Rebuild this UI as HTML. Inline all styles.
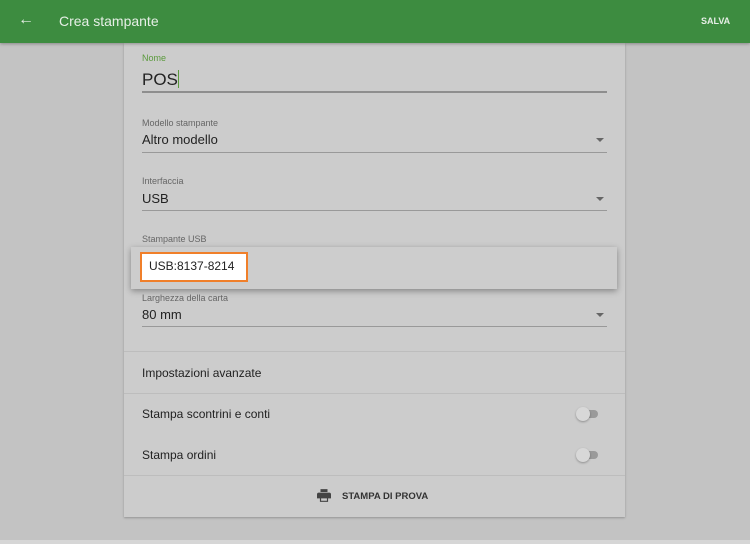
<!DOCTYPE html><html><head><style>
body{margin:0;width:750px;height:544px;background:#c3c3c3;font-family:"Liberation Sans",sans-serif;position:relative;overflow:hidden}
.hdr{position:absolute;left:0;top:0;width:750px;height:43px;background:#3d8c40;box-shadow:0 1px 3px rgba(0,0,0,.3);color:#e6efe6;z-index:3}
.card{position:absolute;left:124px;top:43px;width:501px;height:474px;background:#cccccc;box-shadow:0 1px 2px rgba(0,0,0,.25)}
.a{position:absolute}
.lbl{font-size:9px;color:#666}
.val{font-size:13px;color:#222}
.ul{position:absolute;left:18px;width:465px;height:1px;background:#999}
.arr{position:absolute;left:472px;width:0;height:0;border-left:4px solid transparent;border-right:4px solid transparent;border-top:4px solid #666}
.div{position:absolute;left:0;width:501px;height:1px;background:#bdbdbd}
.sw{position:absolute;left:452px;width:24px;height:10px}
.sw i{position:absolute;left:4px;top:1px;width:18px;height:8px;border-radius:4px;background:#9a9a9a}
.sw b{position:absolute;left:0;top:-2px;width:14px;height:14px;border-radius:7px;background:#d8d8d8;box-shadow:0 1px 2px rgba(0,0,0,.3)}
</style></head><body>
<div class="hdr"><span class="a" style="left:18px;top:11px;font-size:16px">&#8592;</span><span class="a" style="left:59px;top:13px;font-size:14px">Crea stampante</span><span class="a" style="left:701px;top:16px;font-size:9px;font-weight:bold">SALVA</span></div>
<div class="card">
<div class="a lbl" style="left:18px;top:10px;color:#5a9a3c">Nome</div>
<div class="a" style="left:18px;top:27px;font-size:17px;color:#222">POS<span style="display:inline-block;width:1px;height:18px;background:#5a9a3c;vertical-align:-3px"></span></div>
<div class="ul" style="top:48px;height:2px;background:#8e8e8e"></div>
<div class="a lbl" style="left:18px;top:75px">Modello stampante</div>
<div class="a val" style="left:18px;top:89px">Altro modello</div><div class="arr" style="top:95px"></div>
<div class="ul" style="top:109px"></div>
<div class="a lbl" style="left:18px;top:133px">Interfaccia</div>
<div class="a val" style="left:18px;top:148px">USB</div><div class="arr" style="top:154px"></div>
<div class="ul" style="top:167px"></div>
<div class="a lbl" style="left:18px;top:191px">Stampante USB</div>
<div class="a lbl" style="left:18px;top:250px">Larghezza della carta</div>
<div class="a val" style="left:18px;top:264px">80 mm</div><div class="arr" style="top:270px"></div>
<div class="ul" style="top:283px"></div>
<div class="div" style="top:308px"></div>
<div class="a val" style="left:18px;top:323px;font-size:12px">Impostazioni avanzate</div>
<div class="div" style="top:350px"></div>
<div class="a val" style="left:18px;top:364px;font-size:12px">Stampa scontrini e conti</div>
<div class="sw" style="top:366px"><i></i><b></b></div>
<div class="a val" style="left:18px;top:405px;font-size:12px">Stampa ordini</div>
<div class="sw" style="top:407px"><i></i><b></b></div>
<div class="div" style="top:432px"></div>
<svg class="a" style="left:193px;top:446px" width="14" height="13" viewBox="0 0 24 22"><path fill="#444" d="M6 0h12v5H6zM3 6h18a3 3 0 0 1 3 3v7h-5v6H5v-6H0V9a3 3 0 0 1 3-3zm4 10v4h10v-4z"/></svg>
<div class="a" style="left:218px;top:448px;font-size:9.5px;font-weight:bold;color:#333">STAMPA DI PROVA</div>
</div>
<div class="a" style="left:131px;top:247px;width:486px;height:42px;background:#cdcdcd;box-shadow:0 2px 6px rgba(0,0,0,.35)"></div>
<div class="a" style="left:140px;top:252px;width:104px;height:26px;background:#fff;border:2px solid #f07f2a"></div>
<div class="a val" style="left:149px;top:259px;font-size:12px">USB:8137-8214</div>
<div class="a" style="left:0;top:540px;width:750px;height:4px;background:#d6d6d6"></div>
</body></html>
